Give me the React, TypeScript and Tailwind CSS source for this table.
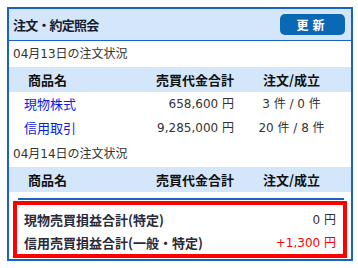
import React from 'react';

const font = { fontFamily: "'DejaVu Sans', 'Noto Sans CJK JP', sans-serif" };
const cjk = { fontFamily: "'Noto Sans CJK JP', sans-serif" };

type Row = { name: string; amount: string; orders: string };

const rows13: Row[] = [
  { name: '現物株式', amount: '658,600 円', orders: '3 件 / 0 件' },
  { name: '信用取引', amount: '9,285,000 円', orders: '20 件 / 8 件' },
];

const TableHead: React.FC = () => (
  <div className="flex h-[25px] items-center bg-[#d4e6f9] text-[13px] font-bold text-[#111]" style={cjk}>
    <div className="w-[108px] pl-[19px]">商品名</div>
    <div className="w-[117px] text-right">売買代金合計</div>
    <div className="flex-1 pr-[2px] text-center">注文/成立</div>
  </div>
);

const App: React.FC = () => {
  return (
    <div className="h-[268px] w-[358px] bg-white pl-[7px] pt-[7px]" style={font}>
      <div className="flex h-[254px] w-[346px] flex-col border-2 border-[#1a63c6]">
        {/* header */}
        <div className="flex h-[32px] items-center justify-between border-b border-[#1a63c6] bg-[#d4e6f9] pl-[4px] pr-[6px]">
          <span className="text-[13px] font-bold tracking-[-0.8px] text-[#1a1a2e]" style={cjk}>注文・約定照会</span>
          <button className="h-[21px] w-[65px] rounded-[5px] bg-[#0b68b4] text-[12px] font-bold tracking-[4px] text-white" style={cjk}>
            更新
          </button>
        </div>

        <div className="flex h-[26px] items-center pl-[4px] text-[12px] text-[#333]">04月13日の注文状況</div>
        <TableHead />
        {rows13.map((r) => (
          <div key={r.name} className="flex h-[24px] items-center text-[12px] text-[#333]">
            <div className="w-[108px] pl-[15px] text-[13px] text-[#0a1ee6]" style={cjk}>{r.name}</div>
            <div className="w-[117px] text-right">{r.amount}</div>
            <div className="flex-1 pr-[2px] text-center">{r.orders}</div>
          </div>
        ))}
        <div className="flex h-[27px] items-center pl-[4px] text-[12px] text-[#333]">04月14日の注文状況</div>
        <TableHead />

        <div className="mr-[7px] ml-[9px] mt-[6px] h-[2px] bg-[#1a63c6]" />

        <div className="mx-[4px] mt-[1px] flex h-[57px] flex-col border-4 border-[#ff0000] px-[7px] pt-[2px] text-[12px]">
          <div className="flex h-[25px] items-center justify-between">
            <span className="text-[13px] font-bold text-[#2a2a3a]" style={cjk}>現物売買損益合計(特定)</span>
            <span className="text-[#333]">0 円</span>
          </div>
          <div className="flex h-[22px] items-center justify-between">
            <span className="text-[13px] font-bold text-[#2a2a3a]" style={cjk}>信用売買損益合計(一般・特定)</span>
            <span className="text-[#ff0000]">+1,300 円</span>
          </div>
        </div>
      </div>
    </div>
  );
};

export default App;
